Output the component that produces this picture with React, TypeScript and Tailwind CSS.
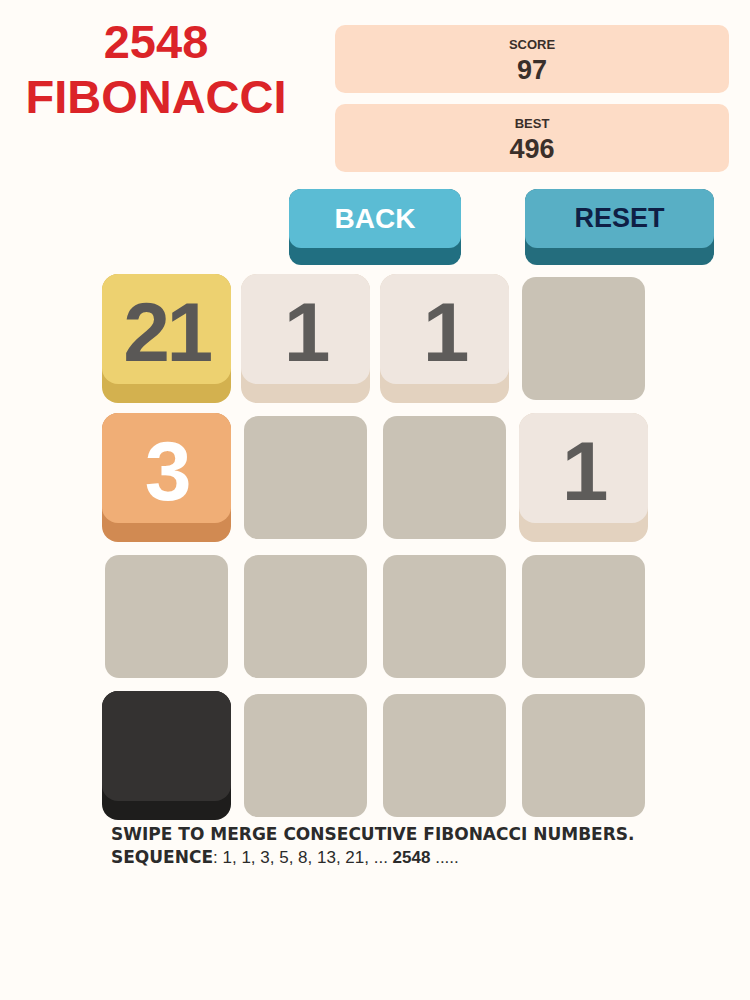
type TileKind = "empty" | "yellow" | "cream" | "orange" | "dark";

type Cell = { kind: TileKind; value?: string };

const board: Cell[] = [
  { kind: "yellow", value: "21" },
  { kind: "cream", value: "1" },
  { kind: "cream", value: "1" },
  { kind: "empty" },
  { kind: "orange", value: "3" },
  { kind: "empty" },
  { kind: "empty" },
  { kind: "cream", value: "1" },
  { kind: "empty" },
  { kind: "empty" },
  { kind: "empty" },
  { kind: "empty" },
  { kind: "dark" },
  { kind: "empty" },
  { kind: "empty" },
  { kind: "empty" },
];

const tileStyles: Record<Exclude<TileKind, "empty">, { base: string; face: string; text: string }> = {
  yellow: { base: "bg-[#d3b14f]", face: "bg-[#edd170]", text: "text-[#5a5856]" },
  cream: { base: "bg-[#e3d2bf]", face: "bg-[#efe6df]", text: "text-[#5e5c5a]" },
  orange: { base: "bg-[#d18a52]", face: "bg-[#f0ae76]", text: "text-white" },
  dark: { base: "bg-[#1e1d1c]", face: "bg-[#343231]", text: "text-white" },
};

function Tile({ cell }: { cell: Cell }) {
  if (cell.kind === "empty") {
    return <div className="h-[123px] rounded-[14px] bg-[#c9c2b5]" />;
  }
  const s = tileStyles[cell.kind];
  return (
    <div className={`-m-[3px] h-[129px] rounded-[16px] pb-[19px] ${s.base}`}>
      <div
        className={`flex h-full items-center justify-center rounded-[16px] pt-[6px] ${s.face} ${s.text}`}
      >
        {cell.value && (
          <span className="text-[84px] font-bold leading-none tracking-[-0.04em]">
            {cell.value}
          </span>
        )}
      </div>
    </div>
  );
}

function ScoreBox({ label, value }: { label: string; value: number }) {
  return (
    <div className="flex h-[68px] flex-col items-center justify-center gap-[4px] rounded-[10px] bg-[#fddcc6] pt-[2px] text-[#3a2f2a]">
      <span className="text-[13px] font-bold leading-[15px]">{label}</span>
      <span className="text-[27px] font-bold leading-[28px]">{value}</span>
    </div>
  );
}

function GameButton({
  label,
  width,
  face,
  base,
  text,
  size,
}: {
  label: string;
  width: string;
  face: string;
  base: string;
  text: string;
  size: string;
}) {
  return (
    <button className={`h-[76px] rounded-[12px] pb-[17px] ${width} ${base}`}>
      <div
        className={`flex h-full items-center justify-center rounded-[12px] font-bold ${face} ${text} ${size}`}
      >
        {label}
      </div>
    </button>
  );
}

export default function App() {
  return (
    <div
      className="min-h-[1000px] w-[750px] bg-[#fffcf8]"
      style={{ fontFamily: '"Liberation Sans", Arial, sans-serif' }}
    >
      {/* Header */}
      <div className="flex">
        <div className="w-[312px] pt-[14px] text-center text-[47px] font-bold leading-[55px] text-[#db2428]">
          <div>2548</div>
          <div>FIBONACCI</div>
        </div>
        <div className="ml-[23px] flex w-[394px] flex-col gap-[11px] pt-[25px]">
          <ScoreBox label="SCORE" value={97} />
          <ScoreBox label="BEST" value={496} />
        </div>
      </div>

      {/* Buttons */}
      <div className="ml-[289px] mt-[17px] flex gap-[64px]">
        <GameButton
          label="BACK"
          width="w-[172px]"
          face="bg-[#5bbcd4]"
          base="bg-[#216f81]"
          text="text-white"
          size="text-[28px]"
        />
        <GameButton
          label="RESET"
          width="w-[189px]"
          face="bg-[#58afc5]"
          base="bg-[#246d7d]"
          text="text-[#0f1f45]"
          size="text-[27px]"
        />
      </div>

      {/* Board */}
      <div className="mx-auto mt-[12px] grid w-[540px] grid-cols-4 gap-[16px]">
        {board.map((cell, i) => (
          <Tile key={i} cell={cell} />
        ))}
      </div>

      {/* Help text */}
      <div className="ml-[111px] mt-[6px] text-[17px] leading-[23px] text-[#2b2b2b]">
        <div className="font-['DejaVu_Sans',sans-serif] font-bold">
          SWIPE TO MERGE CONSECUTIVE FIBONACCI NUMBERS.
        </div>
        <div>
          <span className="font-['DejaVu_Sans',sans-serif] font-bold">SEQUENCE</span>: 1, 1, 3,
          5, 8, 13, 21, ... <span className="font-bold">2548</span> .....
        </div>
      </div>
    </div>
  );
}
